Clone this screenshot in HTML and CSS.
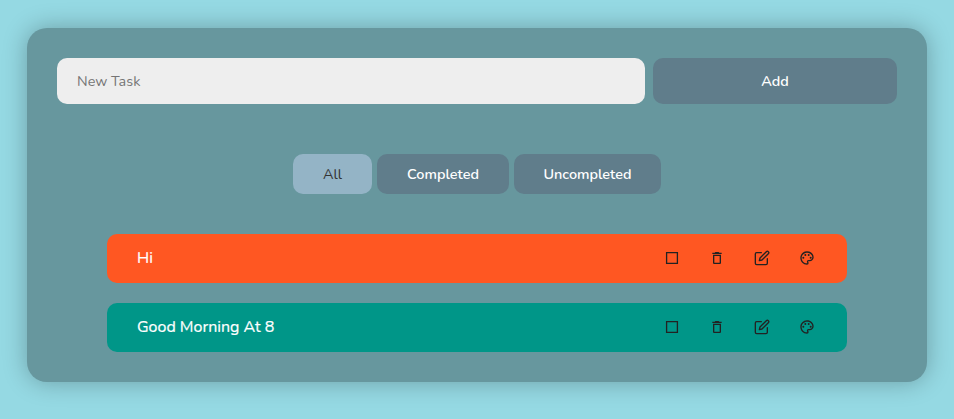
FILE: index.html
```html
<!DOCTYPE html>
<html lang="en">
<head>
<meta charset="utf-8">
<title>Tasks</title>
<link rel="stylesheet" href="styles.css">
</head>
<body>
<svg class="sprite" aria-hidden="true">
  <symbol id="box" viewBox="0 0 16 16"><path d="M2.600 2.600h10.800v10.800H2.600z" fill="none" stroke="currentColor" stroke-width="1.300"/></symbol>
  <symbol id="trash" viewBox="0 0 24 24"><path fill="currentColor" d="M6 19c0 1.100.9 2 2 2h8c1.100 0 2-.9 2-2V7H6v12zM8 9h8v10H8V9zm7.500-5l-1-1h-5l-1 1H5v2h14V4z"/></symbol>
  <symbol id="edit" viewBox="0 0 24 24"><path fill="none" stroke="currentColor" stroke-width="2" stroke-linecap="round" stroke-linejoin="round" d="M11 4H4a2 2 0 0 0-2 2v14a2 2 0 0 0 2 2h14a2 2 0 0 0 2-2v-7M18.500 2.500a2.120 2.120 0 0 1 3 3L12 15l-4 1 1-4z"/></symbol>
  <symbol id="palette" viewBox="0 0 24 24"><path fill="currentColor" d="M12 22C6.490 22 2 17.510 2 12S6.490 2 12 2s10 4.040 10 9c0 3.310-2.690 6-6 6h-1.770c-.28 0-.5.220-.5.500 0 .120.050.230.130.330.410.470.640 1.060.640 1.670A2.500 2.500 0 0 1 12 22zm0-18c-4.410 0-8 3.590-8 8s3.590 8 8 8c.28 0 .5-.22.5-.5a.54.54 0 0 0-.14-.35c-.41-.46-.63-1.050-.63-1.650a2.500 2.500 0 0 1 2.500-2.500H16c2.210 0 4-1.790 4-4 0-3.860-3.590-7-8-7z"/><circle fill="currentColor" cx="6.500" cy="11.500" r="1.500"/><circle fill="currentColor" cx="9.500" cy="7.500" r="1.500"/><circle fill="currentColor" cx="14.500" cy="7.500" r="1.500"/><circle fill="currentColor" cx="17.500" cy="11.500" r="1.500"/></symbol>
</svg>
<main class="card">
  <form class="new-task">
    <input class="field" type="text" placeholder="New Task">
    <button class="btn add" type="button">Add</button>
  </form>
  <nav class="filters">
    <button class="btn all active">All</button>
    <button class="btn completed">Completed</button>
    <button class="btn uncompleted">Uncompleted</button>
  </nav>
  <ul class="tasks">
    <li class="task orange"><span class="title">Hi</span>
      <span class="actions"><svg><use href="#box"/></svg><svg><use href="#trash"/></svg><svg><use href="#edit"/></svg><svg><use href="#palette"/></svg></span></li>
    <li class="task teal"><span class="title">Good Morning At 8</span>
      <span class="actions"><svg><use href="#box"/></svg><svg><use href="#trash"/></svg><svg><use href="#edit"/></svg><svg><use href="#palette"/></svg></span></li>
  </ul>
</main>
</body>
</html>
```
FILE: styles.css
```css
* { box-sizing: border-box; }
body {
  margin: 0;
  height: 419px;
  padding: 28px 27px 0;
  overflow: hidden;
  background: #95d9e3;
  font-family: Nunito, Lato, sans-serif;
}
.sprite { display: none; }
.card {
  height: 354px;
  padding: 30px;
  border-radius: 20px;
  background: #67979e;
  box-shadow: 0 0 25px rgba(0, 0, 0, .28);
}
.new-task { display: flex; gap: 8px; height: 46px; }
.field {
  width: 588px;
  padding: 0 20px;
  border: 0;
  border-radius: 10px;
  background: #eee;
  font: 400 14.4px Nunito, Lato, sans-serif;
}
.field::placeholder { color: #757575; }
.btn {
  padding: 0;
  border: 0;
  border-radius: 10px;
  background: #607d8b;
  color: #fff;
  font: 600 14.4px Nunito, Lato, sans-serif;
}
.add { flex: 1; }
.filters { display: flex; justify-content: center; gap: 5px; height: 40px; margin-top: 50px; }
.all { width: 79px; }
.completed { width: 132px; }
.uncompleted { width: 147px; }
.active { background: #94b4c6; color: #333; font-weight: 400; }
.tasks { display: grid; gap: 20px; margin: 40px 50px 0; padding: 0; list-style: none; }
.task {
  display: flex;
  align-items: center;
  justify-content: space-between;
  height: 49px;
  padding: 0 32px 2px 30px;
  border-radius: 10px;
  color: #fff;
  font-size: 16px;
}
.title { -webkit-text-stroke: .2px #fff; }
.orange { background: #ff5722; }
.teal { background: #009688; }
.actions { display: flex; gap: 29px; color: #222; }
.actions svg { width: 16px; height: 16px; }
```
